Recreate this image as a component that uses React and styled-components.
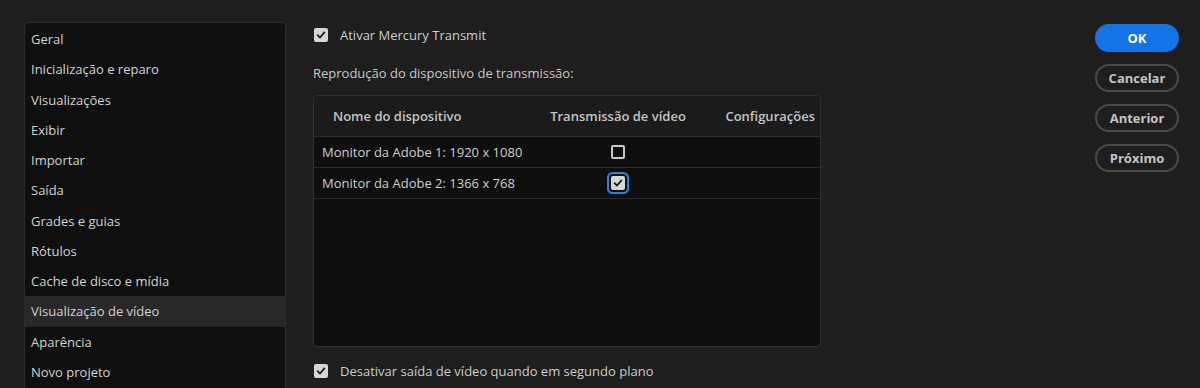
import React from 'react';
import styled, { createGlobalStyle } from 'styled-components';

const GlobalStyle = createGlobalStyle`
  html, body {
    margin: 0;
    padding: 0;
    background: #1e1e1e;
    font-family: "Open Sans", "Noto Sans", sans-serif;
    color: #cbcbcb;
  }
`;

const Page = styled.div`
  display: flex;
  align-items: flex-start;
  height: 388px;
  overflow: hidden;
`;

const Sidebar = styled.div`
  margin: 22px 0 0 24px;
  width: 260px;
  height: 400px;
  background: #0f0f0f;
  border: 1px solid #2b2b2b;
  border-radius: 4px;
  padding-top: 1px;
  flex-shrink: 0;
`;

const NavItem = styled.div`
  height: 30.25px;
  display: flex;
  align-items: center;
  padding-left: 6px;
  font-size: 13px;
  color: #d2d2d2;
  background: ${props => (props.active ? '#282828' : 'transparent')};
`;

const Content = styled.div`
  margin-left: 27px;
  width: 508px;
  flex-shrink: 0;
  display: flex;
  flex-direction: column;
`;

const CheckRow = styled.label`
  display: flex;
  align-items: center;
  gap: 12px;
  height: 26px;
  font-size: 13px;
  color: #cdcdcd;
  padding-left: 1px;
`;

const SectionLabel = styled.div`
  font-size: 13px;
  color: #c9c9c9;
  height: 20px;
  display: flex;
  align-items: center;
  margin-top: 15px;
`;

const Table = styled.div`
  margin-top: 12px;
  height: 250px;
  border: 1px solid #303030;
  border-radius: 4px;
  background: #0e0e0e;
  overflow: hidden;
`;

const HeadRow = styled.div`
  display: grid;
  grid-template-columns: 227px 154px 1fr;
  height: 40px;
  align-items: center;
  background: #1b1b1b;
  border-bottom: 1px solid #2e2e2e;
  font-size: 13px;
  font-weight: 600;
  color: #c4c4c4;
`;

const BodyRow = styled.div`
  display: grid;
  grid-template-columns: 227px 154px 1fr;
  height: 30px;
  align-items: center;
  border-bottom: 1px solid #2a2a2a;
  font-size: 13px;
  color: #cdcdcd;
`;

const Cell = styled.div`
  display: flex;
  align-items: center;
  justify-content: ${props => props.align || 'flex-start'};
  padding-left: ${props => props.pl || 0}px;
  padding-right: ${props => props.pr || 0}px;
  white-space: nowrap;
`;

const Box = styled.span`
  box-sizing: border-box;
  width: 14px;
  height: 14px;
  border-radius: 2px;
  display: inline-flex;
  align-items: center;
  justify-content: center;
  flex-shrink: 0;
  background: ${props => (props.checked ? '#d6d6d6' : 'transparent')};
  border: 2px solid ${props => (props.checked ? '#d6d6d6' : '#c8c8c8')};
  box-shadow: ${props => (props.focused ? '0 0 0 2px #0e0e0e, 0 0 0 4px #2d7fe0' : 'none')};
`;

const Check = () => (
  <svg width="10" height="10" viewBox="0 0 10 10">
    <path d="M1.6 5.2 L4 7.5 L8.4 2.4" fill="none" stroke="#1a1a1a" strokeWidth="1.8" strokeLinecap="round" strokeLinejoin="round" />
  </svg>
);

const Checkbox = ({ checked, focused }) => (
  <Box checked={checked} focused={focused}>{checked && <Check />}</Box>
);

const BottomRow = styled(CheckRow)`
  margin-top: 11px;
`;

const Buttons = styled.div`
  margin-left: auto;
  margin-right: 21px;
  margin-top: 24px;
  display: flex;
  flex-direction: column;
  gap: 12px;
  width: 84px;
`;

const Button = styled.button`
  box-sizing: border-box;
  height: 28px;
  border-radius: 14px;
  font-family: "Open Sans", "Noto Sans", sans-serif;
  font-size: 13px;
  font-weight: 700;
  cursor: pointer;
  background: ${props => (props.primary ? '#1473e6' : 'transparent')};
  border: 2px solid ${props => (props.primary ? '#1473e6' : '#4a4a4a')};
  color: ${props => (props.primary ? '#ffffff' : '#c4c4c4')};
  padding: 0;
`;

const navItems = [
  'Geral',
  'Inicialização e reparo',
  'Visualizações',
  'Exibir',
  'Importar',
  'Saída',
  'Grades e guias',
  'Rótulos',
  'Cache de disco e mídia',
  'Visualização de vídeo',
  'Aparência',
  'Novo projeto',
];

const devices = [
  { name: 'Monitor da Adobe 1: 1920 x 1080', checked: false },
  { name: 'Monitor da Adobe 2: 1366 x 768', checked: true, focused: true },
];

export default function App() {
  return (
    <>
      <GlobalStyle />
      <Page>
        <Sidebar>
          {navItems.map(item => (
            <NavItem key={item} active={item === 'Visualização de vídeo'}>{item}</NavItem>
          ))}
        </Sidebar>
        <Content>
          <CheckRow style={{ marginTop: 22 }}>
            <Checkbox checked />
            Ativar Mercury Transmit
          </CheckRow>
          <SectionLabel>Reprodução do dispositivo de transmissão:</SectionLabel>
          <Table>
            <HeadRow>
              <Cell pl={19}>Nome do dispositivo</Cell>
              <Cell align="center">Transmissão de vídeo</Cell>
              <Cell align="flex-end" pr={5}>Configurações</Cell>
            </HeadRow>
            {devices.map(d => (
              <BodyRow key={d.name}>
                <Cell pl={8}>{d.name}</Cell>
                <Cell align="center">
                  <Checkbox checked={d.checked} focused={d.focused} />
                </Cell>
                <Cell />
              </BodyRow>
            ))}
          </Table>
          <BottomRow>
            <Checkbox checked />
            Desativar saída de vídeo quando em segundo plano
          </BottomRow>
        </Content>
        <Buttons>
          <Button primary>OK</Button>
          <Button>Cancelar</Button>
          <Button>Anterior</Button>
          <Button>Próximo</Button>
        </Buttons>
      </Page>
    </>
  );
}
